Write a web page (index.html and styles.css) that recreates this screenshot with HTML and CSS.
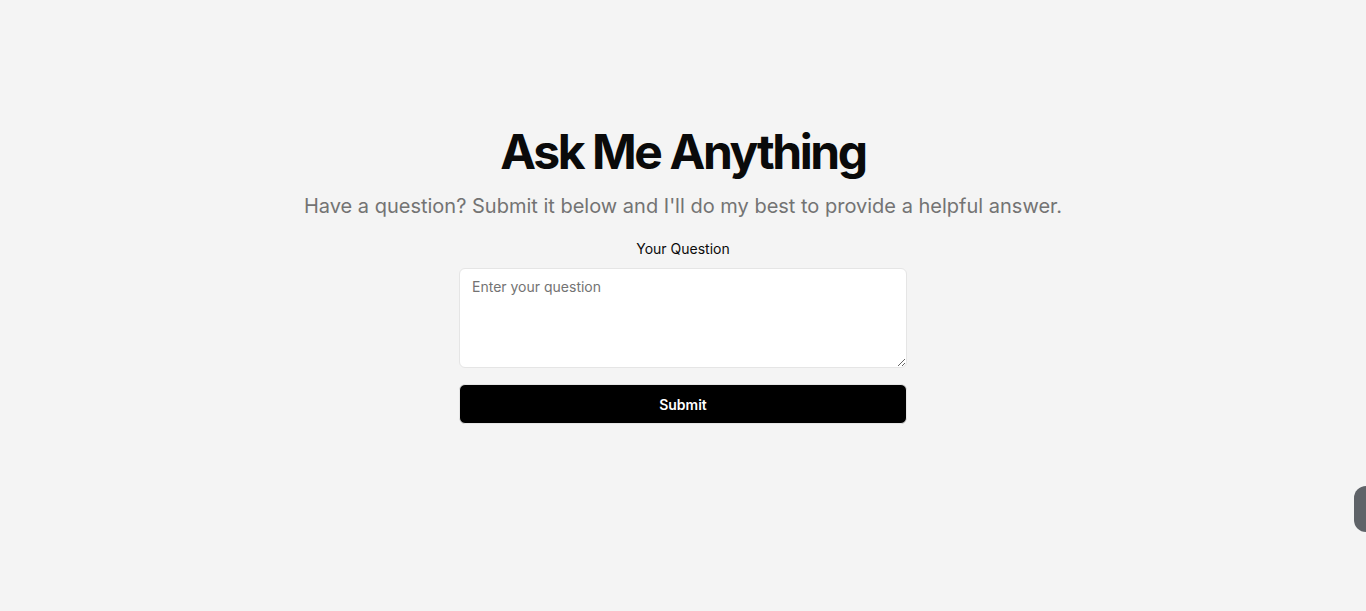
FILE: index.html
```html
<!DOCTYPE html>
<html lang="en">
<head>
<meta charset="utf-8">
<title>Ask Me Anything</title>
<link rel="stylesheet" href="styles.css">
</head>
<body>
<main class="page">
  <h1 class="title">Ask Me Anything</h1>
  <p class="subtitle">Have a question? Submit it below and I'll do my best to provide a helpful answer.</p>
  <form class="form">
    <label class="label" for="q">Your Question</label>
    <textarea id="q" class="input" placeholder="Enter your question"></textarea>
    <button type="button" class="submit">Submit</button>
  </form>
</main>
<div class="side-tab"></div>
</body>
</html>
```
FILE: styles.css
```css
* { box-sizing: border-box; }
html, body { margin: 0; padding: 0; }
body {
  background: #f4f4f4;
  font-family: Inter, "Noto Sans", sans-serif;
  color: #0a0a0a;
  height: 611px;
  overflow: hidden;
}
.page {
  display: flex;
  flex-direction: column;
  align-items: center;
  padding-top: 128px;
}
.title {
  margin: 0;
  font-size: 48px;
  line-height: 48px;
  font-weight: 700;
  letter-spacing: -0.05em;
  color: #0a0a0a;
}
.subtitle {
  margin: 16px 0 0;
  font-size: 20px;
  line-height: 28px;
  color: #737373;
}
.form {
  width: 448px;
  margin-top: 19px;
  display: flex;
  flex-direction: column;
  align-items: stretch;
}
.label {
  text-align: center;
  font-size: 14px;
  line-height: 20px;
  font-weight: 400;
  margin-bottom: 9px;
}
.input {
  display: block;
  width: 100%;
  height: 100px;
  background: #fff;
  border: 1px solid #e5e5e5;
  border-radius: 6px;
  padding: 8px 12px;
  font-family: Inter, "Noto Sans", sans-serif;
  font-size: 14px;
  line-height: 20px;
  color: #0a0a0a;
  resize: vertical;
  outline: none;
}
.input::placeholder { color: #737373; }
.submit {
  margin-top: 16px;
  height: 40px;
  width: 100%;
  background: #000;
  color: #fff;
  border: 1px solid #e5e5e5;
  border-radius: 6px;
  font-family: Inter, "Noto Sans", sans-serif;
  font-size: 14px;
  font-weight: 600;
  cursor: pointer;
}
.side-tab {
  position: fixed;
  right: 0;
  top: 486px;
  width: 12px;
  height: 46px;
  background: #5f6368;
  border-radius: 12px 0 0 12px;
}
```
